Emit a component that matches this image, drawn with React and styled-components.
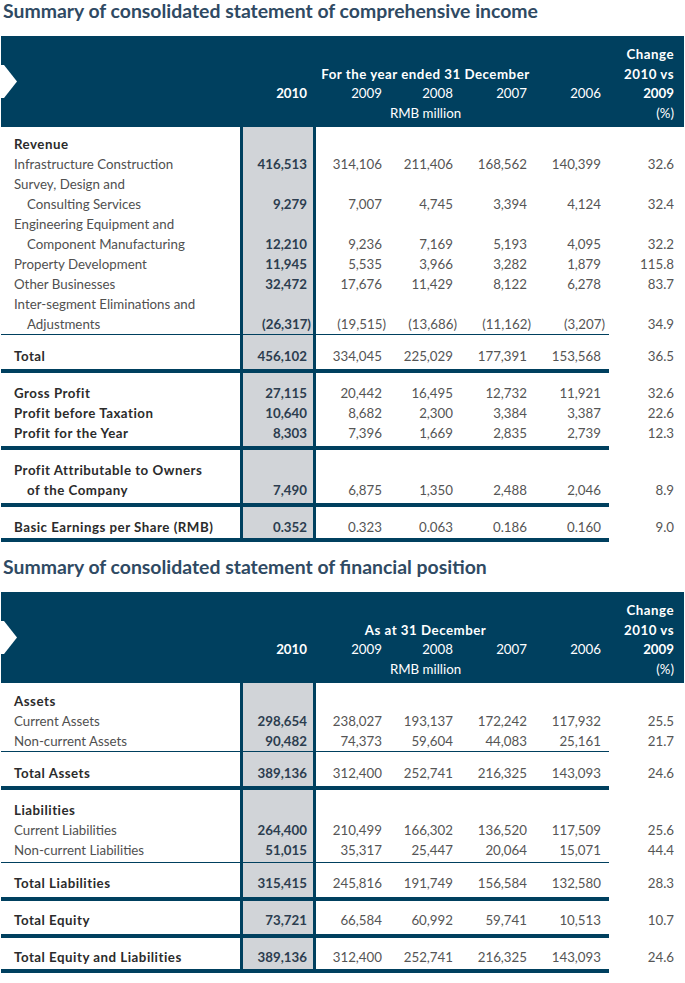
import React from "react";
import styled, { createGlobalStyle } from "styled-components";

const NAVY = "#00405f";
const GREY = "#d1d4d8";
const COLS = "239px 76px 74px 71px 74px 74px 75px";

const GlobalStyle = createGlobalStyle`
  html, body {
    margin: 0;
    padding: 0;
    background: #ffffff;
  }
  body {
    font-family: Lato, "Open Sans", "Liberation Sans", sans-serif;
    -webkit-font-smoothing: antialiased;
  }
`;

const Page = styled.div`
  width: 683px;
  padding-left: 1px;
`;

const Title = styled.h2`
  margin: ${(p) => p.$top || 0}px 0 14px 0;
  padding-left: 2px;
  font-size: 19.4px;
  line-height: 22px;
  font-weight: 700;
  color: #2f4a63;
  white-space: nowrap;
`;

const Band = styled.div`
  position: relative;
  display: grid;
  grid-template-columns: ${COLS};
  grid-auto-rows: 19.5px;
  height: 91px;
  box-sizing: border-box;
  padding: 9px 0 4px;
  background: ${NAVY};
  color: #ffffff;
  font-size: 13.3px;
  line-height: 19.5px;
`;

const Arrow = styled.svg`
  position: absolute;
  left: -1px;
  top: 29px;
`;

const HeadCell = styled.div`
  grid-column: ${(p) => p.$col};
  grid-row: ${(p) => p.$row};
  text-align: ${(p) => (p.$center ? "center" : "right")};
  padding-right: ${(p) => (p.$center ? 0 : p.$pr || 8)}px;
  font-weight: ${(p) => (p.$bold ? 700 : 400)};
  letter-spacing: ${(p) => (p.$wide ? "0.5px" : "normal")};
  white-space: nowrap;
`;

const Body = styled.div`
  background: linear-gradient(
    to right,
    transparent 0,
    transparent 239px,
    ${NAVY} 239px,
    ${NAVY} 242px,
    ${GREY} 242px,
    ${GREY} 312px,
    ${NAVY} 312px,
    ${NAVY} 315px,
    transparent 315px
  );
`;

const Section = styled.div`
  padding: ${(p) => p.$top}px 0 ${(p) => p.$bottom + p.$line}px;
  background: linear-gradient(${NAVY}, ${NAVY}) left bottom / 608px
    ${(p) => p.$line}px no-repeat;
`;

const Row = styled.div`
  display: grid;
  grid-template-columns: ${COLS};
  height: 20px;
  font-size: 13.3px;
  line-height: 20px;
  color: #505050;
`;

const Label = styled.div`
  padding-left: ${(p) => 13 + (p.$indent ? 13 : 0)}px;
  font-weight: ${(p) => (p.$bold ? 700 : 400)};
  letter-spacing: ${(p) => (p.$bold ? "0.5px" : "normal")};
  color: ${(p) => (p.$bold ? "#2b2b2b" : "#505050")};
  white-space: nowrap;
`;

const Num = styled.div`
  text-align: right;
  padding-right: ${(p) => (p.$first ? 9 : p.$change ? 10 : 8)}px;
  font-weight: ${(p) => (p.$first ? 700 : 400)};
  color: ${(p) => (p.$first ? "#2c3d4f" : "#555555")};
  white-space: nowrap;
`;

const Hang = styled.span`
  margin-right: -4px;
`;

const fmt = (v) => {
  if (!v) return "";
  if (v.startsWith("(")) {
    return (
      <>
        {v.slice(0, -1)}
        <Hang>)</Hang>
      </>
    );
  }
  return v;
};

const HeaderBand = ({ caption }) => (
  <Band>
    <Arrow width="17" height="34" viewBox="0 0 17 34">
      <polygon points="0,0 4,0 17,16.5 4,33 0,33" fill="#ffffff" />
    </Arrow>
    <HeadCell $col="7" $row="1" $pr={10} $bold $wide>
      Change
    </HeadCell>
    <HeadCell $col="3 / 6" $row="2" $center $bold $wide>
      {caption}
    </HeadCell>
    <HeadCell $col="7" $row="2" $pr={10} $bold $wide>
      2010 vs
    </HeadCell>
    <HeadCell $col="2" $row="3" $pr={9} $bold>
      2010
    </HeadCell>
    <HeadCell $col="3" $row="3">2009</HeadCell>
    <HeadCell $col="4" $row="3">2008</HeadCell>
    <HeadCell $col="5" $row="3">2007</HeadCell>
    <HeadCell $col="6" $row="3">2006</HeadCell>
    <HeadCell $col="7" $row="3" $pr={10} $bold>
      2009
    </HeadCell>
    <HeadCell $col="3 / 6" $row="4" $center>
      RMB million
    </HeadCell>
    <HeadCell $col="7" $row="4" $pr={10}>
      (%)
    </HeadCell>
  </Band>
);

const DataRow = ({ label, bold, indent, values = [], change }) => (
  <Row>
    <Label $bold={bold} $indent={indent}>
      {label}
    </Label>
    <Num $first>{fmt(values[0])}</Num>
    <Num>{fmt(values[1])}</Num>
    <Num>{fmt(values[2])}</Num>
    <Num>{fmt(values[3])}</Num>
    <Num>{fmt(values[4])}</Num>
    <Num $change>{change}</Num>
  </Row>
);

const incomeSections = [
  {
    top: 7,
    bottom: 0,
    line: 1,
    rows: [
      { label: "Revenue", bold: true },
      {
        label: "Infrastructure Construction",
        values: ["416,513", "314,106", "211,406", "168,562", "140,399"],
        change: "32.6",
      },
      { label: "Survey, Design and" },
      {
        label: "Consulting Services",
        indent: true,
        values: ["9,279", "7,007", "4,745", "3,394", "4,124"],
        change: "32.4",
      },
      { label: "Engineering Equipment and" },
      {
        label: "Component Manufacturing",
        indent: true,
        values: ["12,210", "9,236", "7,169", "5,193", "4,095"],
        change: "32.2",
      },
      {
        label: "Property Development",
        values: ["11,945", "5,535", "3,966", "3,282", "1,879"],
        change: "115.8",
      },
      {
        label: "Other Businesses",
        values: ["32,472", "17,676", "11,429", "8,122", "6,278"],
        change: "83.7",
      },
      { label: "Inter-segment Eliminations and" },
      {
        label: "Adjustments",
        indent: true,
        values: ["(26,317)", "(19,515)", "(13,686)", "(11,162)", "(3,207)"],
        change: "34.9",
      },
    ],
  },
  {
    top: 11,
    bottom: 3,
    line: 4,
    rows: [
      {
        label: "Total",
        bold: true,
        values: ["456,102", "334,045", "225,029", "177,391", "153,568"],
        change: "36.5",
      },
    ],
  },
  {
    top: 10,
    bottom: 3,
    line: 4,
    rows: [
      {
        label: "Gross Profit",
        bold: true,
        values: ["27,115", "20,442", "16,495", "12,732", "11,921"],
        change: "32.6",
      },
      {
        label: "Profit before Taxation",
        bold: true,
        values: ["10,640", "8,682", "2,300", "3,384", "3,387"],
        change: "22.6",
      },
      {
        label: "Profit for the Year",
        bold: true,
        values: ["8,303", "7,396", "1,669", "2,835", "2,739"],
        change: "12.3",
      },
    ],
  },
  {
    top: 10,
    bottom: 3,
    line: 4,
    rows: [
      { label: "Profit Attributable to Owners", bold: true },
      {
        label: "of the Company",
        bold: true,
        indent: true,
        values: ["7,490", "6,875", "1,350", "2,488", "2,046"],
        change: "8.9",
      },
    ],
  },
  {
    top: 10,
    bottom: 1,
    line: 4,
    rows: [
      {
        label: "Basic Earnings per Share (RMB)",
        bold: true,
        values: ["0.352", "0.323", "0.063", "0.186", "0.160"],
        change: "9.0",
      },
    ],
  },
];

const positionSections = [
  {
    top: 8,
    bottom: 0,
    line: 1,
    rows: [
      { label: "Assets", bold: true },
      {
        label: "Current Assets",
        values: ["298,654", "238,027", "193,137", "172,242", "117,932"],
        change: "25.5",
      },
      {
        label: "Non-current Assets",
        values: ["90,482", "74,373", "59,604", "44,083", "25,161"],
        change: "21.7",
      },
    ],
  },
  {
    top: 11,
    bottom: 3,
    line: 4,
    rows: [
      {
        label: "Total Assets",
        bold: true,
        values: ["389,136", "312,400", "252,741", "216,325", "143,093"],
        change: "24.6",
      },
    ],
  },
  {
    top: 10,
    bottom: 2,
    line: 1,
    rows: [
      { label: "Liabilities", bold: true },
      {
        label: "Current Liabilities",
        values: ["264,400", "210,499", "166,302", "136,520", "117,509"],
        change: "25.6",
      },
      {
        label: "Non-current Liabilities",
        values: ["51,015", "35,317", "25,447", "20,064", "15,071"],
        change: "44.4",
      },
    ],
  },
  {
    top: 10,
    bottom: 4,
    line: 4,
    rows: [
      {
        label: "Total Liabilities",
        bold: true,
        values: ["315,415", "245,816", "191,749", "156,584", "132,580"],
        change: "28.3",
      },
    ],
  },
  {
    top: 9,
    bottom: 4,
    line: 4,
    rows: [
      {
        label: "Total Equity",
        bold: true,
        values: ["73,721", "66,584", "60,992", "59,741", "10,513"],
        change: "10.7",
      },
    ],
  },
  {
    top: 9,
    bottom: 2,
    line: 4,
    rows: [
      {
        label: "Total Equity and Liabilities",
        bold: true,
        values: ["389,136", "312,400", "252,741", "216,325", "143,093"],
        change: "24.6",
      },
    ],
  },
];

const Statement = ({ title, top, caption, sections }) => (
  <>
    <Title $top={top}>{title}</Title>
    <HeaderBand caption={caption} />
    <Body>
      {sections.map((s, i) => (
        <Section key={i} $top={s.top} $bottom={s.bottom} $line={s.line}>
          {s.rows.map((r, j) => (
            <DataRow key={j} {...r} />
          ))}
        </Section>
      ))}
    </Body>
  </>
);

export default function App() {
  return (
    <>
      <GlobalStyle />
      <Page>
        <Statement
          title="Summary of consolidated statement of comprehensive income"
          top={0}
          caption="For the year ended 31 December"
          sections={incomeSections}
        />
        <Statement
          title="Summary of consolidated statement of financial position"
          top={14}
          caption="As at 31 December"
          sections={positionSections}
        />
      </Page>
    </>
  );
}
